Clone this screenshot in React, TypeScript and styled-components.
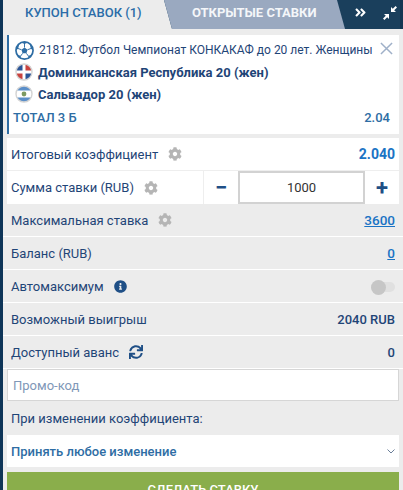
import React from 'react';
import styled, { createGlobalStyle } from 'styled-components';
import { FaAngleDoubleRight, FaCog, FaInfoCircle, FaSync } from 'react-icons/fa';

const GlobalStyle = createGlobalStyle`
  html, body {
    margin: 0;
    padding: 0;
    background: #ececec;
  }
  * { box-sizing: border-box; }
`;

const Coupon = styled.div`
  width: 403px;
  height: 490px;
  overflow: hidden;
  background: #ececec;
  border-left: 3px solid #0e3558;
  font-family: Roboto, "Liberation Sans", sans-serif;
  font-size: 13px;
  color: #1f4577;
`;

const Tabs = styled.div`
  display: flex;
  height: 29px;
  margin-bottom: 6px;
  background: #1a3f5c;
  border-right: 3px solid #143552;
`;

const ActiveTab = styled.div`
  width: 169px;
  padding-left: 22px;
  background: #ececec;
  clip-path: polygon(0 0, 161px 0, 100% 100%, 0 100%);
  font-size: 13px;
  font-weight: 500;
  color: #2b6ca8;
  line-height: 25px;
`;

const OpenTab = styled.div`
  width: 181px;
  margin-left: -8px;
  padding-left: 28px;
  background: #9aa9c0;
  clip-path: polygon(0 0, 173px 0, 100% 100%, 8px 100%);
  font-size: 13px;
  font-weight: 700;
  color: #f4f6f9;
  line-height: 25px;
`;

const TabTools = styled.div`
  display: flex;
  align-items: center;
  gap: 16px;
  margin-left: 9px;
  padding-bottom: 4px;
  color: #fff;
`;

const Card = styled.div`
  position: relative;
  margin: 0 4px 4px 4px;
  height: 99px;
  padding: 4px 8px 0 4px;
  background: #fff;
  border-left: 2px solid #2e6da4;
  display: flex;
  flex-direction: column;
`;

const CardLine = styled.div<{ $bold?: boolean }>`
  display: flex;
  align-items: center;
  gap: 5px;
  height: 22px;
  font-size: ${(p) => (p.$bold ? 13 : 12)}px;
  font-weight: ${(p) => (p.$bold ? 700 : 400)};
  color: #1f4577;
  white-space: nowrap;
  & > svg { flex: none; margin-left: 2px; }
`;

const CloseButton = styled.svg`
  position: absolute;
  top: 7px;
  right: 6px;
`;

const MarketLine = styled.div`
  display: flex;
  justify-content: space-between;
  margin-top: 4px;
  padding-right: 1px;
  font-size: 13px;
  font-weight: 500;
  color: #2e6da4;
  line-height: 18px;
`;

const Row = styled.div<{ $white?: boolean }>`
  display: flex;
  align-items: center;
  justify-content: space-between;
  height: 33px;
  margin: ${(p) => (p.$white ? '0 4px' : '0')};
  padding: ${(p) => (p.$white ? '0 4px' : '0 8px 0 8px')};
  background: ${(p) => (p.$white ? '#fff' : '#ececec')};
  border-bottom: 1px solid ${(p) => (p.$white ? '#eeeeee' : '#ffffff')};
`;

const Label = styled.div`
  display: flex;
  align-items: center;
  gap: 10px;
  font-size: 13px;
  color: #1f4577;
  white-space: nowrap;
`;

const Gear = styled(FaCog)`
  color: #b5b5b5;
  font-size: 14px;
`;

const Coef = styled.span`
  font-size: 14px;
  font-weight: 700;
  color: #1a73c4;
`;

const Value = styled.span`
  font-size: 13px;
  font-weight: 500;
  color: #1f4577;
`;

const ValueLink = styled.a`
  font-size: 13.5px;
  font-weight: 500;
  color: #1a73c4;
  text-decoration: underline;
`;

const StakeRow = styled(Row)`
  padding-right: 0;
  align-items: stretch;
  border-bottom: 0;
`;

const Stepper = styled.div`
  display: flex;
  width: 196px;
  border-left: 1px solid #eeeeee;
`;

const StepButton = styled.div`
  width: 34px;
  display: flex;
  align-items: center;
  justify-content: center;
  font-size: 22px;
  font-weight: 700;
  color: #1f4f86;
  flex: none;
`;

const StakeInput = styled.div`
  width: 129px;
  height: 33px;
  border: 2px solid #d2d2d2;
  display: flex;
  align-items: center;
  justify-content: center;
  font-size: 13px;
  color: #333;
`;

const Toggle = styled.div`
  position: relative;
  width: 24px;
  height: 10px;
  margin-top: 1px;
  border-radius: 5px;
  background: #e0e0e0;
`;

const ToggleKnob = styled.div`
  position: absolute;
  left: 0;
  top: -2px;
  width: 15px;
  height: 15px;
  border-radius: 50%;
  background: #c6c6c6;
`;

const PromoInput = styled.div`
  height: 32px;
  margin: 0 4px;
  padding: 0 5px;
  background: #fff;
  border: 1px solid #d6d6d6;
  display: flex;
  align-items: center;
  font-size: 13px;
  color: #7f98b8;
`;

const ChangeLabel = styled.div`
  height: 34px;
  padding-left: 8px;
  display: flex;
  align-items: center;
  font-size: 13px;
  color: #1f4577;
`;

const Select = styled.div`
  height: 32px;
  margin: 0 4px;
  padding: 0 4px 0 4px;
  background: #fff;
  display: flex;
  align-items: center;
  justify-content: space-between;
  font-size: 13px;
  font-weight: 500;
  color: #2e6da4;
`;

const SubmitButton = styled.div`
  height: 32px;
  margin: 5px 4px 0;
  padding-top: 10px;
  background: #8aae4b;
  text-align: center;
  font-size: 13px;
  font-weight: 500;
  color: #fff;
  line-height: 16px;
`;

const BallIcon = () => (
  <svg width="19" height="19" viewBox="0 0 20 20">
    <circle cx="10" cy="10" r="9" fill="#fff" stroke="#2e6da4" strokeWidth="1.8" />
    <path d="M10 6.8l3.2 2.4-1.2 3.8H8L6.8 9.2z" fill="#2e6da4" />
    <path d="M10 6.8V2M13.2 9.2l4.4-1.6M12 13l2.8 3.8M8 13l-2.8 3.8M6.8 9.2L2.4 7.6" stroke="#2e6da4" strokeWidth="1" fill="none" />
    <path d="M6.5 1.6L10 3.2l3.5-1.6L10 .8zM1.2 9l2-.6L4.4 3.6 2.8 4.6zM18.8 9l-2-.6-1.2-4.8 1.6 1zM5 18.2l.8-2.6-3.4-1.2 1 2.4zM15 18.2l-.8-2.6 3.4-1.2-1 2.4z" fill="#2e6da4" />
  </svg>
);

const DominicanFlag = () => (
  <svg width="18" height="18" viewBox="0 0 18 18">
    <defs>
      <clipPath id="dom">
        <circle cx="9" cy="9" r="8" />
      </clipPath>
    </defs>
    <g clipPath="url(#dom)">
      <rect width="18" height="18" fill="#fff" />
      <rect x="0" y="0" width="7.5" height="7.5" fill="#2b5597" />
      <rect x="10.5" y="0" width="7.5" height="7.5" fill="#c9433f" />
      <rect x="0" y="10.5" width="7.5" height="7.5" fill="#c9433f" />
      <rect x="10.5" y="10.5" width="7.5" height="7.5" fill="#2b5597" />
    </g>
    <circle cx="9" cy="9" r="8" fill="none" stroke="#d4d4d4" strokeWidth="1.4" />
  </svg>
);

const SalvadorFlag = () => (
  <svg width="18" height="18" viewBox="0 0 18 18">
    <defs>
      <clipPath id="slv">
        <circle cx="9" cy="9" r="8" />
      </clipPath>
    </defs>
    <g clipPath="url(#slv)">
      <rect width="18" height="18" fill="#fff" />
      <rect width="18" height="5.5" fill="#5b8fc9" />
      <rect y="12.5" width="18" height="5.5" fill="#5b8fc9" />
      <circle cx="9" cy="9" r="2.4" fill="#7c9a62" />
    </g>
    <circle cx="9" cy="9" r="8" fill="none" stroke="#d4d4d4" strokeWidth="1.4" />
  </svg>
);

const CompressIcon = () => (
  <svg width="14" height="14" viewBox="0 0 14 14" fill="#fff">
    <path d="M8 1v5h5l-1.8-1.8L14 1.4 12.6 0 9.8 2.8z" />
    <path d="M6 13V8H1l1.8 1.8L0 12.6 1.4 14l2.8-2.8z" />
  </svg>
);

const App = () => {
  return (
    <>
      <GlobalStyle />
      <Coupon>
        <Tabs>
          <ActiveTab>КУПОН СТАВОК (1)</ActiveTab>
          <OpenTab>ОТКРЫТЫЕ СТАВКИ</OpenTab>
          <TabTools>
            <FaAngleDoubleRight size={13} />
            <CompressIcon />
          </TabTools>
        </Tabs>
        <Card>
          <CardLine>
            <BallIcon />
            21812. Футбол Чемпионат КОНКАКАФ до 20 лет. Женщины
          </CardLine>
          <CardLine $bold>
            <DominicanFlag />
            Доминиканская Республика 20 (жен)
          </CardLine>
          <CardLine $bold>
            <SalvadorFlag />
            Сальвадор 20 (жен)
          </CardLine>
          <MarketLine>
            <span>ТОТАЛ 3 Б</span>
            <span>2.04</span>
          </MarketLine>
          <CloseButton width="13" height="13" viewBox="0 0 14 14" stroke="#9fb0c8" strokeWidth="1.6">
            <path d="M1 1l12 12M13 1L1 13" />
          </CloseButton>
        </Card>
        <Row $white>
          <Label>
            Итоговый коэффициент
            <Gear />
          </Label>
          <Coef>2.040</Coef>
        </Row>
        <StakeRow $white>
          <Label>
            Сумма ставки (RUB)
            <Gear />
          </Label>
          <Stepper>
            <StepButton>−</StepButton>
            <StakeInput>1000</StakeInput>
            <StepButton>+</StepButton>
          </Stepper>
        </StakeRow>
        <Row>
          <Label>
            Максимальная ставка
            <Gear />
          </Label>
          <ValueLink>3600</ValueLink>
        </Row>
        <Row>
          <Label>Баланс (RUB)</Label>
          <ValueLink>0</ValueLink>
        </Row>
        <Row>
          <Label>
            Автомаксимум
            <FaInfoCircle size={13} color="#1f4f86" />
          </Label>
          <Toggle>
            <ToggleKnob />
          </Toggle>
        </Row>
        <Row>
          <Label>Возможный выигрыш</Label>
          <Value>2040 RUB</Value>
        </Row>
        <Row>
          <Label>
            Доступный аванс
            <FaSync size={14} color="#1f4f86" />
          </Label>
          <Value>0</Value>
        </Row>
        <PromoInput>Промо-код</PromoInput>
        <ChangeLabel>При изменении коэффициента:</ChangeLabel>
        <Select>
          Принять любое изменение
          <svg width="8" height="5" viewBox="0 0 8 5" fill="none" stroke="#6b7f99" strokeWidth="1">
            <path d="M.5.5L4 4 7.5.5" />
          </svg>
        </Select>
        <SubmitButton>СДЕЛАТЬ СТАВКУ</SubmitButton>
      </Coupon>
    </>
  );
};

export default App;
